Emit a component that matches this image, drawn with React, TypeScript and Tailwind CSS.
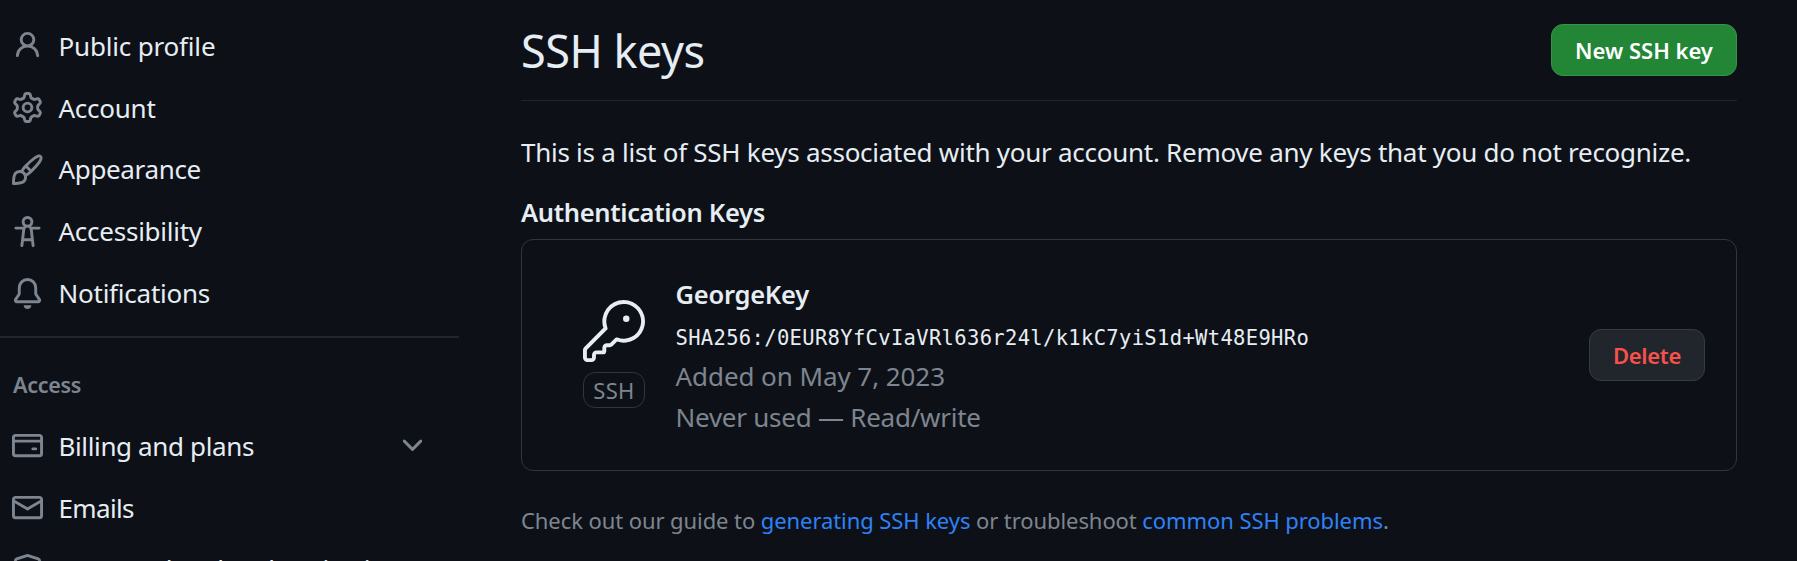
import { GoKey } from "react-icons/go";

const icons = {
  person:
    "M10.561 8.073a6.005 6.005 0 0 1 3.432 5.142.75.75 0 1 1-1.498.07 4.5 4.5 0 0 0-8.99 0 .75.75 0 0 1-1.498-.07 6.004 6.004 0 0 1 3.431-5.142 3.999 3.999 0 1 1 5.123 0ZM10.5 5a2.5 2.5 0 1 0-5 0 2.5 2.5 0 0 0 5 0Z",
  gear: "M8 0a8.2 8.2 0 0 1 .701.031C9.444.095 9.99.645 10.16 1.29l.288 1.107c.018.066.079.158.212.224.231.114.454.243.668.386.123.082.233.09.299.071l1.103-.303c.644-.176 1.392.021 1.82.63.27.385.506.792.704 1.218.315.675.111 1.422-.364 1.891l-.814.806c-.049.048-.098.147-.088.294.016.257.016.515 0 .772-.01.147.038.246.088.294l.814.806c.475.469.679 1.216.364 1.891a7.977 7.977 0 0 1-.704 1.217c-.428.61-1.176.807-1.82.63l-1.102-.302c-.067-.019-.177-.011-.3.071a5.909 5.909 0 0 1-.668.386c-.133.066-.194.158-.211.224l-.29 1.106c-.168.646-.715 1.196-1.458 1.26a8.006 8.006 0 0 1-1.402 0c-.743-.064-1.289-.614-1.458-1.26l-.289-1.106c-.018-.066-.079-.158-.212-.224a5.738 5.738 0 0 1-.668-.386c-.123-.082-.233-.09-.299-.071l-1.103.303c-.644.176-1.392-.021-1.82-.63a8.12 8.12 0 0 1-.704-1.218c-.315-.675-.111-1.422.363-1.891l.815-.806c.05-.048.098-.147.088-.294a6.214 6.214 0 0 1 0-.772c.01-.147-.038-.246-.088-.294l-.815-.806C.635 6.045.431 5.298.746 4.623a7.92 7.92 0 0 1 .704-1.217c.428-.61 1.176-.807 1.82-.63l1.102.302c.067.019.177.011.3-.071.214-.143.437-.272.668-.386.133-.066.194-.158.211-.224l.29-1.106C6.009.645 6.556.095 7.299.03 7.53.01 7.764 0 8 0Zm-.571 1.525c-.036.003-.108.036-.137.146l-.289 1.105c-.147.561-.549.967-.998 1.189-.173.086-.34.183-.5.29-.417.278-.97.423-1.529.27l-1.103-.303c-.109-.03-.175.016-.195.045-.22.312-.412.644-.573.99-.014.031-.021.11.059.19l.815.806c.411.406.562.957.53 1.456a4.709 4.709 0 0 0 0 .582c.032.499-.119 1.05-.53 1.456l-.815.806c-.081.08-.073.159-.059.19.162.346.353.677.573.989.02.03.085.076.195.046l1.102-.303c.56-.153 1.113-.008 1.53.27.161.107.328.204.501.29.447.222.85.629.997 1.189l.289 1.105c.029.109.101.143.137.146a6.6 6.6 0 0 0 1.142 0c.036-.003.108-.036.137-.146l.289-1.105c.147-.561.549-.967.998-1.189.173-.086.34-.183.5-.29.417-.278.97-.423 1.529-.27l1.103.303c.109.029.175-.016.195-.045.22-.313.411-.644.573-.99.014-.031.021-.11-.059-.19l-.815-.806c-.411-.406-.562-.957-.53-1.456a4.709 4.709 0 0 0 0-.582c-.032-.499.119-1.05.53-1.456l.815-.806c.081-.08.073-.159.059-.19a6.464 6.464 0 0 0-.573-.989c-.02-.03-.085-.076-.195-.046l-1.102.303c-.56.153-1.113.008-1.53-.27a4.44 4.44 0 0 0-.501-.29c-.447-.222-.85-.629-.997-1.189l-.289-1.105c-.029-.11-.101-.143-.137-.146a6.6 6.6 0 0 0-1.142 0ZM11 8a3 3 0 1 1-6 0 3 3 0 0 1 6 0ZM9.5 8a1.5 1.5 0 1 0-3.001.001A1.5 1.5 0 0 0 9.5 8Z",
  paintbrush:
    "M11.134 1.535c.7-.509 1.416-.942 2.076-1.155.649-.21 1.463-.267 2.069.34.603.601.568 1.411.368 2.07-.202.668-.624 1.39-1.125 2.096-1.011 1.424-2.496 2.987-3.775 4.249-1.098 1.084-2.132 1.839-3.04 2.3a3.744 3.744 0 0 1-1.055 3.217c-.431.431-1.065.691-1.657.861-.614.177-1.294.287-1.914.357A21.151 21.151 0 0 1 .797 16H.743l.007-.75H.749L.742 16a.75.75 0 0 1-.743-.742l.743-.008-.742.007v-.054a21.25 21.25 0 0 1 .13-2.284c.067-.647.187-1.287.358-1.914.17-.591.43-1.226.86-1.657a3.746 3.746 0 0 1 3.227-1.054c.466-.893 1.225-1.907 2.314-2.982 1.271-1.255 2.833-2.75 4.245-3.777ZM1.62 13.089c-.051.464-.086.929-.104 1.395.466-.018.932-.053 1.396-.104a10.511 10.511 0 0 0 1.668-.309c.526-.151.856-.325 1.011-.48a2.25 2.25 0 1 0-3.182-3.182c-.155.155-.329.485-.48 1.01a10.515 10.515 0 0 0-.309 1.67Zm10.396-10.34c-1.224.89-2.605 2.189-3.822 3.384l1.718 1.718c1.21-1.205 2.51-2.597 3.387-3.833.47-.662.78-1.227.912-1.662.134-.444.032-.551.009-.575h-.001V1.78c-.014-.014-.113-.113-.548.027-.432.14-.995.462-1.655.942Zm-4.832 7.266-.001.001a9.859 9.859 0 0 0 1.63-1.142L7.155 7.216a9.7 9.7 0 0 0-1.161 1.607c.482.302.889.71 1.19 1.192Z",
  accessibility:
    "M9.923 5.302c.063.063.122.129.178.198H14A.75.75 0 0 1 14 7h-3.3l.578 5.163.362 2.997a.75.75 0 0 1-1.49.18L9.868 13H6.132l-.282 2.34a.75.75 0 0 1-1.49-.18l.362-2.997L5.3 7H2a.75.75 0 0 1 0-1.5h3.9a2.54 2.54 0 0 1 .176-.198 3 3 0 1 1 3.847 0ZM9.2 7.073h-.001a1.206 1.206 0 0 0-2.398 0L6.305 11.5h3.39ZM9.5 3a1.5 1.5 0 1 0-3.001.001A1.5 1.5 0 0 0 9.5 3Z",
  bell: "M8 16a2 2 0 0 0 1.985-1.75c.017-.137-.097-.25-.235-.25h-3.5c-.138 0-.252.113-.235.25A2 2 0 0 0 8 16ZM3 5a5 5 0 0 1 10 0v2.947c0 .05.015.098.042.139l1.703 2.555A1.519 1.519 0 0 1 13.482 13H2.518a1.516 1.516 0 0 1-1.263-2.36l1.703-2.554A.255.255 0 0 0 3 7.947Zm5-3.5A3.5 3.5 0 0 0 4.5 5v2.947c0 .346-.102.683-.294.97l-1.703 2.556a.017.017 0 0 0-.003.01l.001.006c0 .002.002.004.004.006l.006.004.007.001h10.964l.007-.001.006-.004.004-.006.001-.007a.017.017 0 0 0-.003-.01l-1.703-2.554a1.745 1.745 0 0 1-.294-.97V5A3.5 3.5 0 0 0 8 1.5Z",
  card: "M10.75 9a.75.75 0 0 0 0 1.5h1.5a.75.75 0 0 0 0-1.5h-1.5Z M0 3.75C0 2.784.784 2 1.75 2h12.5c.966 0 1.75.784 1.75 1.75v8.5A1.75 1.75 0 0 1 14.25 14H1.75A1.75 1.75 0 0 1 0 12.25ZM14.5 6.5h-13v5.75c0 .138.112.25.25.25h12.5a.25.25 0 0 0 .25-.25Zm0-2.75a.25.25 0 0 0-.25-.25H1.75a.25.25 0 0 0-.25.25V5h13Z",
  mail: "M1.75 2h12.5c.966 0 1.75.784 1.75 1.75v8.5A1.75 1.75 0 0 1 14.25 14H1.75A1.75 1.75 0 0 1 0 12.25v-8.5C0 2.784.784 2 1.75 2ZM1.5 12.251c0 .138.112.25.25.25h12.5a.25.25 0 0 0 .25-.25V5.809L8.38 9.397a.75.75 0 0 1-.76 0L1.5 5.809v6.442Zm13-8.181v-.32a.25.25 0 0 0-.25-.25H1.75a.25.25 0 0 0-.25.25v.32L8 7.88Z",
  shield:
    "m8.533.133 5.25 1.68A1.75 1.75 0 0 1 15 3.48V7c0 1.566-.32 3.182-1.303 4.682-.983 1.498-2.585 2.813-5.032 3.855a1.697 1.697 0 0 1-1.33 0c-2.447-1.042-4.049-2.357-5.032-3.855C1.32 10.182 1 8.566 1 7V3.48a1.755 1.755 0 0 1 1.217-1.667l5.25-1.68a1.748 1.748 0 0 1 1.066 0Zm-.61 1.429.001.001-5.25 1.68a.251.251 0 0 0-.174.237V7c0 1.36.275 2.666 1.057 3.859.784 1.194 2.121 2.342 4.366 3.298a.196.196 0 0 0 .154 0c2.245-.957 3.582-2.103 4.366-3.297C13.225 9.666 13.5 8.358 13.5 7V3.48a.25.25 0 0 0-.174-.238l-5.25-1.68a.25.25 0 0 0-.153 0Z",
  chevron:
    "M12.78 5.22a.749.749 0 0 1 0 1.06l-4.25 4.25a.749.749 0 0 1-1.06 0L3.22 6.28a.749.749 0 1 1 1.06-1.06L8 8.939l3.72-3.719a.749.749 0 0 1 1.06 0Z",
};

type IconName = keyof typeof icons;

function Icon({ name }: { name: IconName }) {
  return (
    <svg viewBox="0 0 16 16" className="size-[31px] shrink-0 fill-[#7d8590]" aria-hidden="true">
      <path d={icons[name]} />
    </svg>
  );
}

interface NavEntry {
  icon: IconName;
  label: string;
  tracking: string;
  expandable?: boolean;
}

const profileNav: NavEntry[] = [
  { icon: "person", label: "Public profile", tracking: "tracking-[-0.18px]" },
  { icon: "gear", label: "Account", tracking: "tracking-[-0.25px]" },
  { icon: "paintbrush", label: "Appearance", tracking: "tracking-[-0.35px]" },
  { icon: "accessibility", label: "Accessibility", tracking: "tracking-[-0.25px]" },
  { icon: "bell", label: "Notifications", tracking: "tracking-[-0.24px]" },
];

const accessNav: NavEntry[] = [
  { icon: "card", label: "Billing and plans", tracking: "tracking-[-0.37px]", expandable: true },
  { icon: "mail", label: "Emails", tracking: "tracking-[-0.65px]" },
  { icon: "shield", label: "Password and authentication", tracking: "tracking-[-0.5px]" },
];

function NavList({ entries }: { entries: NavEntry[] }) {
  return (
    <ul>
      {entries.map((e) => (
        <li key={e.label} className="flex h-[61.8px] items-center pr-[31px] pl-3">
          <Icon name={e.icon} />
          <span className={`ml-[15.5px] flex-1 whitespace-nowrap text-[26px] leading-9 ${e.tracking}`}>{e.label}</span>
          {e.expandable && <Icon name="chevron" />}
        </li>
      ))}
    </ul>
  );
}

export default function App() {
  return (
    <div className="flex h-[561px] w-full overflow-hidden bg-[#0d1117] font-['Noto_Sans','Open_Sans',sans-serif] text-[#e6edf3]">
      <nav className="w-[459px] shrink-0 pt-[15px]">
        <NavList entries={profileNav} />
        <div className="mt-3 border-t-2 border-[#21262d] pt-[31px]">
          <h2 className="mb-[14px] pl-[13px] text-[21.5px] leading-8 font-semibold tracking-[-0.3px] text-[#7d8590]">
            Access
          </h2>
          <NavList entries={accessNav} />
        </div>
      </nav>

      <main className="ml-[62px] w-[1216px]">
        <header className="flex h-[101px] items-start justify-between border-b border-[#21262d] pt-6">
          <h1 className="-mt-[3px] text-[45px] leading-[60px] tracking-[-0.5px]">SSH keys</h1>
          <button className="flex h-[52px] w-[186px] items-center justify-center rounded-xl border border-[#359447] bg-[#238636] text-[22px] leading-8 font-semibold text-white">
            New SSH key
          </button>
        </header>

        <p className="mt-[33px] whitespace-nowrap text-[26px] leading-9 tracking-[-0.27px]">
          This is a list of SSH keys associated with your account. Remove any keys that you do not recognize.
        </p>
        <h3 className="mt-[24px] text-[25.5px] leading-9 font-semibold tracking-[-0.33px]">Authentication Keys</h3>

        <section className="mt-[9px] flex h-[232px] items-center rounded-xl border border-[#30363d] pr-[31px] pl-[61px]">
          <div className="mb-[2px] flex w-[62px] flex-col items-center gap-[10px]">
            <GoKey className="size-[62px]" />
            <span className="flex h-9 w-full items-center justify-center rounded-xl border border-[#30363d] text-[22px] leading-7 tracking-[0.3px] text-[#7d8590]">
              SSH
            </span>
          </div>
          <div className="mt-[2px] ml-[30.5px] flex-1 whitespace-nowrap text-[26px] leading-[41px]">
            <strong className="block text-[25.5px] font-semibold tracking-[-0.25px]">GeorgeKey</strong>
            <code className="block pt-[6px] font-['DejaVu_Sans_Mono',monospace] text-[20.5px] leading-[35px] tracking-[0.33px]">
              SHA256:/0EUR8YfCvIaVRl636r24l/k1kC7yiS1d+Wt48E9HRo
            </code>
            <span className="block tracking-[-0.07px] text-[#7d8590]">Added on May 7, 2023</span>
            <span className="block tracking-[-0.25px] text-[#7d8590]">Never used — Read/write</span>
          </div>
          <button className="flex h-[52px] w-[116px] items-center justify-center rounded-xl border border-[#363b42] bg-[#21262d] text-[22px] leading-8 font-semibold tracking-[-0.3px] text-[#f85149]">
            Delete
          </button>
        </section>

        <p className="mt-[33px] whitespace-nowrap text-[22px] leading-8 tracking-[-0.08px] text-[#7d8590]">
          Check out our guide to <a className="text-[#2f81f7]">generating SSH keys</a> or troubleshoot{" "}
          <a className="text-[#2f81f7]">common SSH problems</a>.
        </p>
      </main>
    </div>
  );
}
